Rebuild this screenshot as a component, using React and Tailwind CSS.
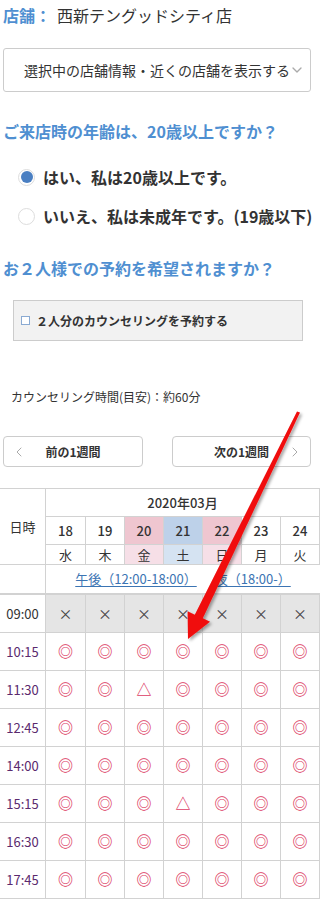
import { ChevronDown, ChevronLeft, ChevronRight } from 'lucide-react'

const days = [
  { d: '18', w: '水', top: '', bottom: '' },
  { d: '19', w: '木', top: '', bottom: '' },
  { d: '20', w: '金', top: 'bg-[#efc6d0]', bottom: 'bg-[#f6dfe7]' },
  { d: '21', w: '土', top: 'bg-[#bdd1e9]', bottom: 'bg-[#d5e3f2]' },
  { d: '22', w: '日', top: 'bg-[#efc6d0]', bottom: 'bg-[#f6dfe7]' },
  { d: '23', w: '月', top: '', bottom: '' },
  { d: '24', w: '火', top: '', bottom: '' }
]

const rows = [
  { t: '09:00', s: '×××××××' },
  { t: '10:15', s: '◎◎◎◎◎◎◎' },
  { t: '11:30', s: '◎◎△◎◎◎◎' },
  { t: '12:45', s: '◎◎◎◎◎◎◎' },
  { t: '14:00', s: '◎◎◎◎◎◎◎' },
  { t: '15:15', s: '◎◎◎△◎◎◎' },
  { t: '16:30', s: '◎◎◎◎◎◎◎' },
  { t: '17:45', s: '◎◎◎◎◎◎◎' }
]

const cell = 'border-r border-b border-[#d2d2d2] flex items-center justify-center'

export default function App() {
  return (
    <div className="relative w-[320px] min-h-[900px] overflow-hidden bg-white text-[#333] font-['Noto_Sans_CJK_JP','Noto_Sans',sans-serif]">
      <div className="px-[3px]">
        {/* Store */}
        <div className="h-[30px] flex items-center text-[16px]">
          <span className="font-bold text-[#4f8fd1]">店舗：</span>
          <span className="ml-[6px]">西新テングッドシティ店</span>
        </div>

        <div className="mt-[18px] h-[44px] w-[308px] border border-[#cccccc] rounded-[3px] flex items-center pl-[20px] text-[14px] whitespace-nowrap">
          <span>選択中の店舗情報・近くの店舗を表示する</span>
          <ChevronDown className="w-[16px] h-[16px] text-[#aaaaaa] -ml-[1px]" strokeWidth={2} />
        </div>

        {/* Age */}
        <div className="mt-[27px] h-[24px] flex items-center text-[16px] font-bold text-[#4f8fd1] whitespace-nowrap">
          ご来店時の年齢は、20歳以上ですか？
        </div>

        <div className="mt-[22px] h-[24px] flex items-center pl-[15px] whitespace-nowrap">
          <span className="w-[17px] h-[17px] rounded-full border border-[#dddddd] flex items-center justify-center">
            <span className="w-[12px] h-[12px] rounded-full bg-[#4a7fc2]" />
          </span>
          <span className="ml-[8px] text-[16px] font-bold">はい、私は20歳以上です。</span>
        </div>

        <div className="mt-[15px] h-[24px] flex items-center pl-[15px] whitespace-nowrap">
          <span className="w-[17px] h-[17px] rounded-full border border-[#dddddd] bg-white shrink-0" />
          <span className="ml-[8px] text-[16px] font-bold">いいえ、私は未成年です。(19歳以下)</span>
        </div>

        {/* Pair */}
        <div className="mt-[28px] h-[24px] flex items-center text-[16px] font-bold text-[#4f8fd1] whitespace-nowrap">
          お２人様での予約を希望されますか？
        </div>

        <div className="mt-[20px] ml-[10px] w-[290px] h-[41px] bg-[#f2f2f2] border border-[#cccccc] flex items-center pl-[7px]">
          <span className="w-[9px] h-[9px] border border-[#8aaad2] bg-white" />
          <span className="ml-[6px] text-[12px] font-bold">２人分のカウンセリングを予約する</span>
        </div>

        <div className="mt-[46px] h-[20px] flex items-center pl-[8px] text-[12px]">
          カウンセリング時間(目安)：約60分
        </div>

        {/* Week nav */}
        <div className="mt-[29px] flex gap-[29px]">
          <button className="relative w-[140px] h-[31px] border border-[#cccccc] rounded-[4px] bg-white flex items-center justify-center text-[12px] font-bold">
            <ChevronLeft className="absolute left-[7px] w-[16px] h-[16px] text-[#aaaaaa]" strokeWidth={1.5} />
            前の1週間
          </button>
          <button className="relative w-[139px] h-[31px] border border-[#cccccc] rounded-[4px] bg-white flex items-center justify-center text-[12px] font-bold">
            次の1週間
            <ChevronRight className="absolute right-[7px] w-[16px] h-[16px] text-[#aaaaaa]" strokeWidth={1.5} />
          </button>
        </div>
      </div>

      {/* Calendar */}
      <div className="mt-[21px] grid grid-cols-[46px_40px_repeat(6,39px)] border-t border-[#d2d2d2] text-[13px]">
        <div className={`${cell} row-span-3`}>日時</div>
        <div className={`${cell} col-span-7 h-[28px] font-medium`}>2020年03月</div>
        {days.map(d => (
          <div key={d.d} className={`${cell} h-[28px] font-medium ${d.top}`}>{d.d}</div>
        ))}
        {days.map(d => (
          <div key={d.w} className={`${cell} h-[20px] ${d.bottom}`}>{d.w}</div>
        ))}
        <div className="border-r border-b-2 border-[#d2d2d2] h-[30px]" />
        <div className="col-span-7 border-b-2 border-[#d2d2d2] h-[30px] flex items-center justify-center gap-[18px] text-[#3b74b3] whitespace-nowrap">
          <span className="underline underline-offset-2">午後（12:00-18:00）</span>
          <span className="underline underline-offset-2">夜（18:00-）</span>
        </div>

        {rows.map((r, i) => (
          <div key={r.t} className="contents">
            <div className={`${cell} h-[38px] ${i === 0 ? 'text-[#333]' : 'text-[#5b2a6e]'}`}>{r.t}</div>
            {r.s.split('').map((m, j) => (
              <div
                key={j}
                className={`${cell} h-[38px] ${i === 0 ? 'bg-[#e5e5e5]' : ''} ${m === '×' ? 'text-[#444] text-[14px]' : 'text-[#dc3c64] text-[15px] font-bold'}`}
              >
                {m}
              </div>
            ))}
          </div>
        ))}
      </div>

      {/* Red arrow overlay */}
      <svg className="absolute left-0 top-0 w-[320px] h-[900px] pointer-events-none" viewBox="0 0 320 900">
        <defs>
          <filter id="sh" x="-20%" y="-20%" width="140%" height="140%">
            <feDropShadow dx="2" dy="2" stdDeviation="1.5" floodColor="#000" floodOpacity="0.35" />
          </filter>
        </defs>
        <polygon
          points="300,412.6 202.8,618.2 210,621.7 188,639 187.6,611.3 194.8,614.8 297,411.4"
          fill="#f00c0c"
          filter="url(#sh)"
        />
      </svg>
    </div>
  )
}
